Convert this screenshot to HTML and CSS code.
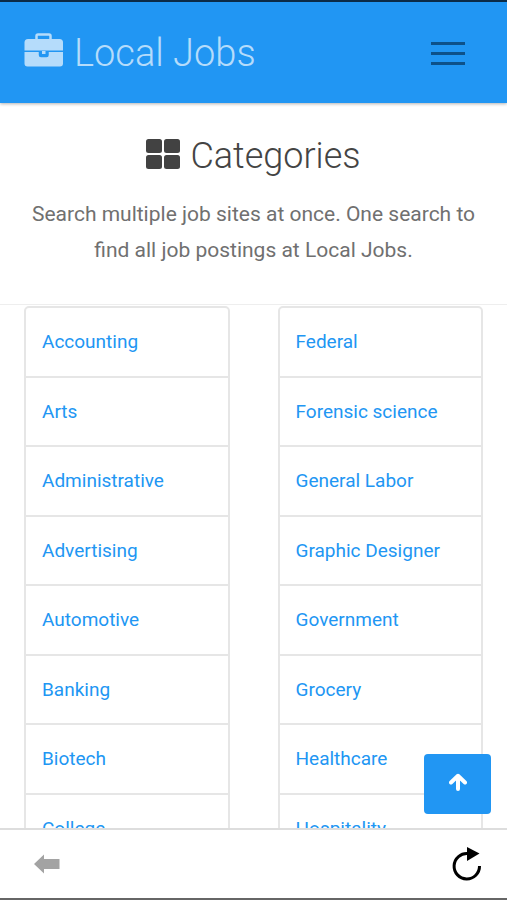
FILE: index.html
```html
<!DOCTYPE html>
<html lang="en">
<head>
<meta charset="utf-8">
<meta name="viewport" content="width=device-width, initial-scale=1">
<title>Local Jobs</title>
<link rel="stylesheet" href="styles.css">
</head>
<body>
<header class="navbar">
  <a class="brand" href="#">
    <svg class="brand-icon" viewBox="0 0 40 34" aria-hidden="true">
      <path d="M12.500 7V3Q12.500 1.500 14 1.500H25Q26.500 1.500 26.500 3V7" fill="none" stroke="currentColor" stroke-width="2.500"/>
      <path d="M4 6H35.500Q39 6 39 9.500V17.500H0.500V9.500Q0.500 6 4 6Z" fill="currentColor"/>
      <path d="M.5 19H15.500V22Q15.500 24 17.500 24H22Q24 24 24 22V19H39V30.500Q39 33.500 36 33.500H3.500Q.5 33.500 .5 30.500Z" fill="currentColor"/>
      <path d="M15.500 19V22Q15.500 23.500 17 23.500H22.500Q24 23.500 24 22V19" fill="none" stroke="#2196f3" stroke-width="1.500"/>
      <path d="M18 18H21.500V21H18Z" fill="currentColor"/>
    </svg>
    <span>Local Jobs</span>
  </a>
  <button class="menu-button" type="button" aria-label="Menu">
    <span class="menu-bar"></span><span class="menu-bar"></span><span class="menu-bar"></span>
  </button>
</header>
<main class="content">
  <section class="intro">
    <h1 class="title">
      <svg class="title-icon" viewBox="0 0 34 30" aria-hidden="true">
        <rect width="16" height="14" rx="2.500"/><rect x="18" width="16" height="14" rx="2.500"/>
        <rect y="16" width="16" height="14" rx="2.500"/><rect x="18" y="16" width="16" height="14" rx="2.500"/>
      </svg>
      <span>Categories</span>
    </h1>
    <p class="lead">Search multiple job sites at once. One search to find all job postings at Local Jobs.</p>
  </section>
  <div class="columns">
    <ul class="list">
      <li><a href="#">Accounting</a></li>
      <li><a href="#">Arts</a></li>
      <li><a href="#">Administrative</a></li>
      <li><a href="#">Advertising</a></li>
      <li><a href="#">Automotive</a></li>
      <li><a href="#">Banking</a></li>
      <li><a href="#">Biotech</a></li>
      <li><a href="#">College</a></li>
    </ul>
    <ul class="list">
      <li><a href="#">Federal</a></li>
      <li><a href="#">Forensic science</a></li>
      <li><a href="#">General Labor</a></li>
      <li><a href="#">Graphic Designer</a></li>
      <li><a href="#">Government</a></li>
      <li><a href="#">Grocery</a></li>
      <li><a href="#">Healthcare</a></li>
      <li><a href="#">Hospitality</a></li>
    </ul>
  </div>
</main>
<footer class="toolbar">
  <button class="tool" type="button" aria-label="Back">
    <svg class="back-icon" viewBox="0 0 26 20" aria-hidden="true"><path d="M0 10L10 .5V5H25.500V15H10V19.500Z" fill="#a3a3a3"/></svg>
  </button>
  <button class="tool" type="button" aria-label="Reload">
    <svg class="reload-icon" viewBox="0 0 30 36" aria-hidden="true">
      <path d="M27.500 20A12.700 12.700 0 1 1 16 7.600" fill="none" stroke="#000" stroke-width="3"/>
      <path d="M15 1L27.500 7.500L15 15Z" fill="#000"/>
    </svg>
  </button>
  <button class="to-top" type="button" aria-label="Back to top">
    <svg class="up-icon" viewBox="0 0 18 18" aria-hidden="true"><path d="M9 16V4M2 9.500L9 2.800L16 9.500" fill="none" stroke="#fff" stroke-width="4" stroke-linecap="round" stroke-linejoin="round"/></svg>
  </button>
</footer>
</body>
</html>
```
FILE: styles.css
```css
* { box-sizing: border-box; }
body {
  margin: 0;
  height: 100vh;
  display: flex;
  flex-direction: column;
  background: #fff;
  color: #707070;
  font-family: Roboto, "Liberation Sans", sans-serif;
}
a { text-decoration: none; }
button { border: 0; padding: 0; background: none; cursor: pointer; }
svg { display: block; }

.navbar {
  position: relative;
  flex: none;
  display: flex;
  align-items: center;
  justify-content: space-between;
  padding: 21px 42px 20px 24px;
  border-top: 2px solid #0b2b47;
  background: #2196f3;
  box-shadow: 0 1px 3px rgba(0, 0, 0, .3);
}
.brand {
  display: flex;
  align-items: center;
  gap: 10px;
  color: #b5dcfb;
  font-size: 38px;
  font-weight: 300;
  line-height: 60px;
}
.brand-icon { width: 40px; height: 34px; margin-bottom: 6px; }
.menu-button {
  display: flex;
  flex-direction: column;
  gap: 7px;
  width: 34px;
}
.menu-bar { height: 3px; background: #0d5189; }

.content { flex: 1; min-height: 0; overflow: hidden; }
.intro {
  padding: 25px 24px 36px;
  border-bottom: 1px solid #eee;
  text-align: center;
}
.title {
  display: flex;
  align-items: center;
  justify-content: center;
  gap: 10px;
  margin: 0 0 12px;
  color: #444;
  font-size: 36px;
  font-weight: 300;
  line-height: 56px;
}
.title-icon { width: 34px; height: 30px; margin-bottom: 4px; fill: #424242; }
.lead { margin: 0; font-size: 21px; line-height: 36px; }

.columns {
  display: grid;
  grid-template-columns: 1fr 1fr;
  gap: 48px;
  padding: 1px 24px 0;
}
.list {
  margin: 0;
  padding: 0;
  list-style: none;
  border: 2px solid #e6e6e6;
  border-radius: 5px;
  font-size: 19px;
  line-height: 1.5;
}
.list li { padding: 20px 16px 19px; }
.list li + li { border-top: 2px solid #e6e6e6; }
.list a { color: #2196f3; }

.toolbar {
  position: relative;
  flex: none;
  display: flex;
  align-items: center;
  justify-content: space-between;
  height: 72px;
  padding: 0 25px 0 34px;
  border-top: 2px solid #ddd;
  border-bottom: 2px solid #666;
  background: #fff;
}
.back-icon { width: 26px; height: 20px; }
.reload-icon { width: 30px; height: 36px; }
.to-top {
  position: absolute;
  right: 16px;
  bottom: 100%;
  margin-bottom: 16px;
  display: grid;
  place-items: center;
  width: 67px;
  height: 60px;
  padding-bottom: 4px;
  border-radius: 4px;
  background: #2196f3;
}
.up-icon { width: 18px; height: 18px; }
```
